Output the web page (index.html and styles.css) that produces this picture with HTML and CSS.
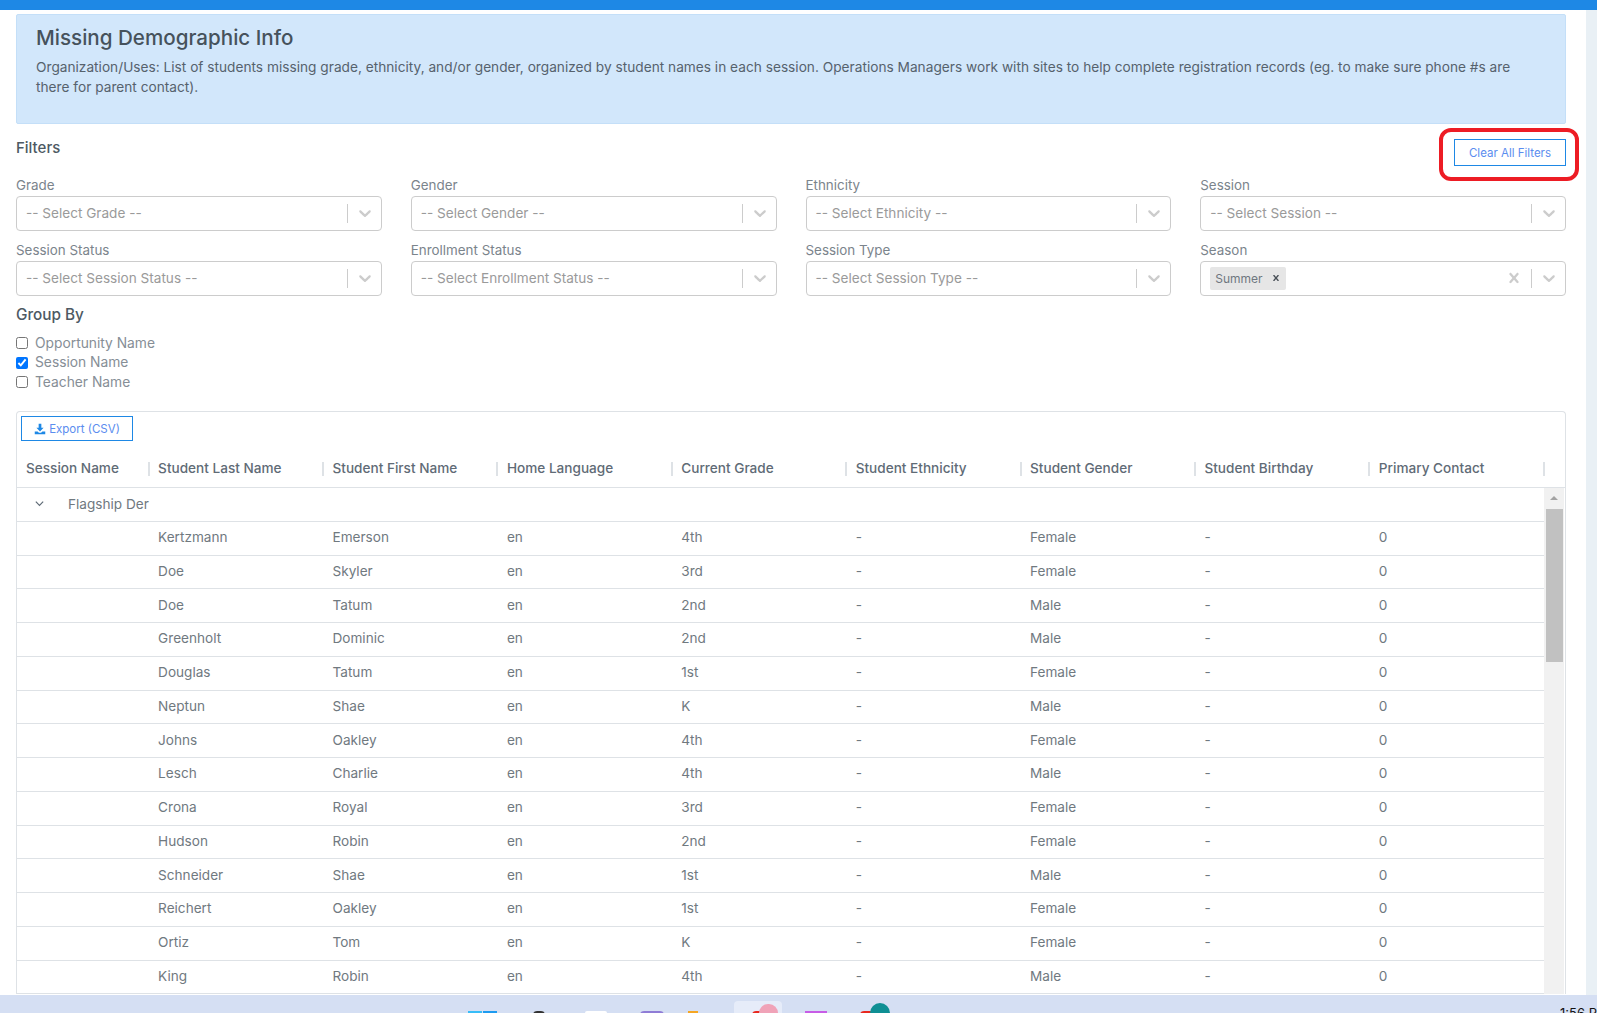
FILE: index.html
```html
<!DOCTYPE html>
<html lang="en">
<head>
<meta charset="utf-8">
<title>Missing Demographic Info</title>
<link rel="stylesheet" href="styles.css">
</head>
<body>
<svg class="defs" aria-hidden="true">
  <symbol id="chev" viewBox="0 0 20 20"><path d="M4.516 7.548c0.436-0.446 1.043-0.481 1.576 0l3.908 3.747 3.908-3.747c0.533-0.481 1.141-0.446 1.574 0 0.436 0.445 0.408 1.197 0 1.615-0.406 0.418-4.695 4.502-4.695 4.502-0.217 0.223-0.502 0.335-0.787 0.335s-0.57-0.112-0.789-0.335c0 0-4.287-4.084-4.695-4.502s-0.436-1.17 0-1.615z"/></symbol>
  <symbol id="cross" viewBox="0 0 20 20"><path d="M14.348 14.849c-0.469 0.469-1.229 0.469-1.697 0l-2.651-3.030-2.651 3.029c-0.469 0.469-1.229 0.469-1.697 0-0.469-0.469-0.469-1.229 0-1.697l2.758-3.15-2.759-3.152c-0.469-0.469-0.469-1.228 0-1.697s1.228-0.469 1.697 0l2.652 3.031 2.651-3.031c0.469-0.469 1.228-0.469 1.697 0s0.469 1.229 0 1.697l-2.758 3.152 2.758 3.15c0.469 0.469 0.469 1.229 0 1.698z"/></symbol>
</svg>
<div class="app">
  <div class="topbar"></div>
  <div class="middle">
    <main class="content">
      <section class="alert">
        <h1>Missing Demographic Info</h1>
        <p>Organization/Uses: List of students missing grade, ethnicity, and/or gender, organized by student names in each session. Operations Managers work with sites to help complete registration records (eg. to make sure phone #s are<br>there for parent contact).</p>
      </section>

      <div class="filters-head">
        <h2>Filters</h2>
        <div class="clear-wrap">
          <button class="btn-clear">Clear All Filters</button>
          <span class="annotation"></span>
        </div>
      </div>

      <div class="filters">
        <div class="field"><label>Grade</label><div class="select"><span class="ph">-- Select Grade --</span><i class="sep"></i><svg class="ico"><use href="#chev"/></svg></div></div>
        <div class="field"><label>Gender</label><div class="select"><span class="ph">-- Select Gender --</span><i class="sep"></i><svg class="ico"><use href="#chev"/></svg></div></div>
        <div class="field"><label>Ethnicity</label><div class="select"><span class="ph">-- Select Ethnicity --</span><i class="sep"></i><svg class="ico"><use href="#chev"/></svg></div></div>
        <div class="field"><label>Session</label><div class="select"><span class="ph">-- Select Session --</span><i class="sep"></i><svg class="ico"><use href="#chev"/></svg></div></div>
        <div class="field"><label>Session Status</label><div class="select"><span class="ph">-- Select Session Status --</span><i class="sep"></i><svg class="ico"><use href="#chev"/></svg></div></div>
        <div class="field"><label>Enrollment Status</label><div class="select"><span class="ph">-- Select Enrollment Status --</span><i class="sep"></i><svg class="ico"><use href="#chev"/></svg></div></div>
        <div class="field"><label>Session Type</label><div class="select"><span class="ph">-- Select Session Type --</span><i class="sep"></i><svg class="ico"><use href="#chev"/></svg></div></div>
        <div class="field"><label>Season</label><div class="select"><span class="chip">Summer<svg class="chip-x"><use href="#cross"/></svg></span><span class="grow"></span><svg class="ico"><use href="#cross"/></svg><i class="sep"></i><svg class="ico"><use href="#chev"/></svg></div></div>
      </div>

      <h2 class="group-title">Group By</h2>
      <div class="checks">
        <label class="check"><input type="checkbox">Opportunity Name</label>
        <label class="check"><input type="checkbox" checked>Session Name</label>
        <label class="check"><input type="checkbox">Teacher Name</label>
      </div>

      <section class="card">
        <button class="btn-export"><svg class="dl" viewBox="0 0 16 16"><path d="M6.2 1h3.6v5.4h3L8 11.2 3.2 6.4h3z"/><path d="M1 11.2h3.8L6.6 13h2.8l1.8-1.8H15V15H1z"/></svg>Export (CSV)</button>
        <div class="thead">
          <div class="th">Session Name</div><div class="th">Student Last Name</div><div class="th">Student First Name</div><div class="th">Home Language</div><div class="th">Current Grade</div><div class="th">Student Ethnicity</div><div class="th">Student Gender</div><div class="th">Student Birthday</div><div class="th">Primary Contact</div>
        </div>
        <div class="tbody">
          <div class="rows">
            <div class="row group"><div class="group-cell"><svg class="group-chev" viewBox="0 0 12 12"><path d="M2 4l4 4 4-4"/></svg>Flagship Der</div></div>
            <div class="row"><div></div><div>Kertzmann</div><div>Emerson</div><div>en</div><div>4th</div><div>-</div><div>Female</div><div>-</div><div>0</div></div>
            <div class="row"><div></div><div>Doe</div><div>Skyler</div><div>en</div><div>3rd</div><div>-</div><div>Female</div><div>-</div><div>0</div></div>
            <div class="row"><div></div><div>Doe</div><div>Tatum</div><div>en</div><div>2nd</div><div>-</div><div>Male</div><div>-</div><div>0</div></div>
            <div class="row"><div></div><div>Greenholt</div><div>Dominic</div><div>en</div><div>2nd</div><div>-</div><div>Male</div><div>-</div><div>0</div></div>
            <div class="row"><div></div><div>Douglas</div><div>Tatum</div><div>en</div><div>1st</div><div>-</div><div>Female</div><div>-</div><div>0</div></div>
            <div class="row"><div></div><div>Neptun</div><div>Shae</div><div>en</div><div>K</div><div>-</div><div>Male</div><div>-</div><div>0</div></div>
            <div class="row"><div></div><div>Johns</div><div>Oakley</div><div>en</div><div>4th</div><div>-</div><div>Female</div><div>-</div><div>0</div></div>
            <div class="row"><div></div><div>Lesch</div><div>Charlie</div><div>en</div><div>4th</div><div>-</div><div>Male</div><div>-</div><div>0</div></div>
            <div class="row"><div></div><div>Crona</div><div>Royal</div><div>en</div><div>3rd</div><div>-</div><div>Female</div><div>-</div><div>0</div></div>
            <div class="row"><div></div><div>Hudson</div><div>Robin</div><div>en</div><div>2nd</div><div>-</div><div>Female</div><div>-</div><div>0</div></div>
            <div class="row"><div></div><div>Schneider</div><div>Shae</div><div>en</div><div>1st</div><div>-</div><div>Male</div><div>-</div><div>0</div></div>
            <div class="row"><div></div><div>Reichert</div><div>Oakley</div><div>en</div><div>1st</div><div>-</div><div>Female</div><div>-</div><div>0</div></div>
            <div class="row"><div></div><div>Ortiz</div><div>Tom</div><div>en</div><div>K</div><div>-</div><div>Female</div><div>-</div><div>0</div></div>
            <div class="row"><div></div><div>King</div><div>Robin</div><div>en</div><div>4th</div><div>-</div><div>Male</div><div>-</div><div>0</div></div>
          </div>
          <div class="vscroll"><i class="arrow"></i><i class="thumb"></i></div>
        </div>
      </section>
    </main>
    <div class="page-scroll"></div>
  </div>
  <footer class="taskbar">
    <i class="tb tb-win"></i><i class="tb tb-black"></i><i class="tb tb-white"></i><i class="tb tb-purple"></i><i class="tb tb-orange"></i>
    <span class="tb-active"><i class="tb-red"></i><i class="tb-avatar"></i></span>
    <i class="tb tb-magenta"></i>
    <span class="tb-profile"><i class="tb-red"></i><i class="tb-teal"></i></span>
    <span class="tb-time">1:56 PM</span>
  </footer>
</div>
</body>
</html>
```
FILE: styles.css
```css
* { box-sizing: border-box; }
html, body { margin: 0; height: 100%; }
body { font-family: Inter, "Noto Sans", "Liberation Sans", sans-serif; font-size: 13px; color: #6c757d; background: #fff; overflow: hidden; }
.defs { display: none; }
.app { display: flex; flex-direction: column; height: 100vh; overflow: hidden; }
.topbar { height: 10px; background: #1e88e5; flex: none; }
.middle { flex: 1; min-height: 0; display: flex; }
.content { flex: 1; min-width: 0; padding: 4px 20px 0 16px; overflow: hidden; }
.page-scroll { width: 11px; background: #e9f0f5; flex: none; }

.alert { height: 110px; background: #d2e7fb; border: 1px solid #c4dff8; border-radius: 2px; padding: 11px 19px; color: #56626d; white-space: nowrap; }
.alert h1 { margin: 0; font-size: 20.6px; line-height: 24px; font-weight: 500; color: #46525c; }
.alert p { margin: 7px 0 0; font-size: 13.7px; line-height: 20px; }

.filters-head { display: flex; justify-content: space-between; margin-top: 15px; height: 27px; }
h2 { margin: 0; font-size: 15px; font-weight: 500; color: #4d5963; }
.filters-head h2 { line-height: 18px; }
.clear-wrap { position: relative; }
.btn-clear { width: 112px; height: 27px; background: #fff; border: 1px solid #1e88e5; color: #5b8def; font: inherit; font-size: 11.5px; padding: 0; }
.annotation { position: absolute; left: -15px; top: -11px; width: 140px; height: 53px; border: 4px solid #ed1c24; border-radius: 12px; pointer-events: none; }

.filters { display: grid; grid-template-columns: repeat(4, 1fr); column-gap: 29px; row-gap: 11px; margin-top: 11px; }
.field label { display: block; height: 19px; line-height: 16px; font-size: 13.4px; color: #7b848c; }
.select { height: 35px; border: 1px solid #ccc; border-radius: 4px; display: flex; align-items: center; padding: 0 6px 1px 9px; background: #fff; }
.ph { flex: 1; color: #9a9a9a; font-size: 13.6px; white-space: nowrap; }
.grow { flex: 1; }
.sep { width: 1px; height: 19px; background: #ccc; margin: 0 7px 0 1px; flex: none; }
.ico { width: 20px; height: 20px; fill: #ccc; flex: none; }
.select .ico:not(:last-child) { margin-right: 6px; }
.chip { display: flex; align-items: center; height: 23px; background: #e6e6e6; border-radius: 2px; padding: 0 4px 0 5px; font-size: 12px; color: #6f7780; width: 76px; justify-content: space-between; }
.chip-x { width: 12px; height: 12px; fill: #495057; }

.group-title { margin-top: 10px; line-height: 18px; font-size: 15.3px; }
.checks { margin-top: 9px; }
.check { display: flex; align-items: center; height: 19.5px; font-size: 13.8px; color: #868e96; }
.check input { width: 12px; height: 12px; margin: 1px 7px 0 0; flex: none; }

.card { margin-top: 19.5px; border: 1px solid #dee2e6; border-radius: 4px 4px 0 0; border-bottom: 0; }
.btn-export { display: flex; align-items: center; justify-content: center; gap: 3px; width: 112px; height: 25px; margin: 4px 0 0 4px; background: #fff; border: 1px solid #1e88e5; color: #5b8def; font: inherit; font-size: 11.5px; padding: 0; }
.dl { width: 12px; height: 12px; fill: #1e88e5; }
.thead, .row { display: grid; grid-template-columns: 132.6px repeat(8, 174.4px); }
.thead { height: 47px; border-bottom: 1px solid #dee2e6; align-items: center; padding-top: 7px; }
.th { position: relative; padding-left: 8.5px; font-size: 13.6px; font-weight: 500; color: #5f6b76; white-space: nowrap; }
.th:first-child { padding-left: 9px; }
.th::after { content: ""; position: absolute; right: 0; top: 2px; width: 2px; height: 14px; background: #dee2e6; }
.tbody { display: flex; }
.rows { width: 1527px; flex: none; overflow: hidden; }
.row { height: 33.75px; border-bottom: 1px solid #dee2e6; padding-bottom: 2px; align-items: center; font-size: 13.6px; color: #70797f; }
.row > div { padding-left: 8.5px; white-space: nowrap; }
.row.group { display: block; padding-bottom: 0; }
.row.group > .group-cell { display: flex; align-items: center; height: 31px; padding-left: 17px; }
.group-chev { width: 11px; height: 11px; fill: none; stroke: #5f6b76; stroke-width: 1.3; margin-right: 23px; flex: none; }
.vscroll { width: 20px; flex: none; background: #f1f1f1; display: flex; flex-direction: column; align-items: center; padding-top: 8px; }
.arrow { width: 0; height: 0; border-left: 4px solid transparent; border-right: 4px solid transparent; border-bottom: 4px solid #a3a3a3; flex: none; }
.thumb { width: 17px; height: 153px; background: #c1c1c1; margin-top: 9px; flex: none; }

.taskbar { height: 18px; flex: none; background: #d5dff3; display: flex; align-items: flex-start; overflow: hidden; }
.tb { flex: none; display: block; margin-top: 16px; }
.tb-win { width: 29px; height: 4px; margin-left: 468px; background: linear-gradient(90deg, #38bdf8 0 48%, #d5dff3 48% 52%, #1d9bf0 52%); }
.tb-black { width: 12px; height: 4px; margin-left: 36px; background: #333; border-radius: 6px 6px 0 0; }
.tb-white { width: 22px; height: 4px; margin-left: 40px; background: #fff; border-radius: 2px 2px 0 0; }
.tb-purple { width: 24px; height: 4px; margin-left: 33px; background: #8f7cd6; border-radius: 12px 12px 0 0; }
.tb-orange { width: 10px; height: 3px; margin-left: 24px; background: #f5a623; }
.tb-active { flex: none; width: 48px; height: 12px; margin: 6px 0 0 36px; background: #e6ecf9; border-radius: 4px 4px 0 0; display: flex; align-items: flex-start; }
.tb-red { display: block; flex: none; width: 14px; height: 4px; margin: 10px -7px 0 18px; background: #e8281e; border-radius: 7px 7px 0 0; }
.tb-avatar { display: block; flex: none; width: 19px; height: 9px; margin-top: 3px; background: #f0a3b8; border-radius: 10px 10px 0 0; position: relative; }
.tb-magenta { width: 22px; height: 3px; margin-left: 23px; background: #c75ce6; }
.tb-profile { flex: none; display: flex; align-items: flex-start; margin-left: 33px; }
.tb-profile .tb-red { margin: 16px -4px 0 0; }
.tb-teal { display: block; flex: none; width: 20px; height: 10px; margin-top: 8px; background: #0f8f94; border-radius: 10px 10px 0 0; position: relative; }
.tb-time { flex: none; margin: 10px 0 0 auto; width: 37px; font-size: 13px; line-height: 16px; color: #111; white-space: nowrap; overflow: hidden; }
```
